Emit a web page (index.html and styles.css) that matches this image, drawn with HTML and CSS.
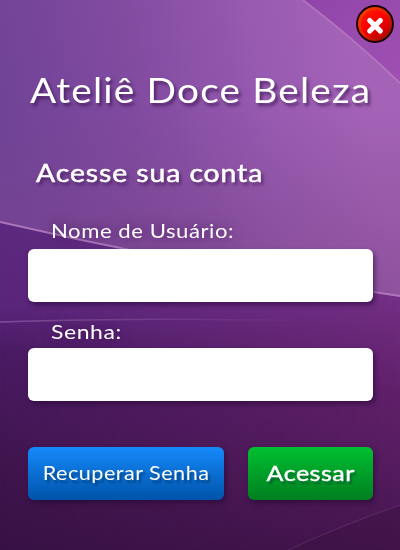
FILE: index.html
```html
<!DOCTYPE html>
<html lang="pt-BR">
<head>
<meta charset="utf-8">
<title>Ateliê Doce Beleza</title>
<link rel="stylesheet" href="styles.css">
</head>
<body>
<main class="login">
  <svg class="backdrop" viewBox="0 0 400 550" aria-hidden="true">
    <defs>
      <linearGradient id="upper" gradientUnits="userSpaceOnUse" x1="0" y1="100" x2="350" y2="30">
        <stop offset="0" stop-color="#704397"/><stop offset=".35" stop-color="#804a9f"/><stop offset=".72" stop-color="#965ab0"/><stop offset="1" stop-color="#a463b7"/>
      </linearGradient>
      <linearGradient id="shade" x1="0" y1="0" x2="0" y2="1">
        <stop offset=".35" stop-color="#7c4387" stop-opacity="0"/><stop offset="1" stop-color="#7c4387" stop-opacity=".55"/>
      </linearGradient>
      <linearGradient id="corner" x1="0" y1="0" x2="1" y2="1">
        <stop offset="0" stop-color="#9145a9"/><stop offset="1" stop-color="#a050b3"/>
      </linearGradient>
      <linearGradient id="lower" gradientUnits="userSpaceOnUse" x1="0" y1="225" x2="0" y2="550">
        <stop offset="0" stop-color="#5c297f"/><stop offset=".25" stop-color="#58257a"/><stop offset=".4" stop-color="#4a1a63"/><stop offset=".72" stop-color="#40154f"/><stop offset="1" stop-color="#371145"/>
      </linearGradient>
      <linearGradient id="warm" gradientUnits="userSpaceOnUse" x1="0" y1="290" x2="0" y2="550">
        <stop offset="0" stop-color="#753087"/><stop offset=".4" stop-color="#602069"/><stop offset=".72" stop-color="#531b5c"/><stop offset="1" stop-color="#45154e"/>
      </linearGradient>
      <linearGradient id="fade"><stop offset="0" stop-color="#fff" stop-opacity="0"/><stop offset="1" stop-color="#fff"/></linearGradient>
      <linearGradient id="streak"><stop offset="0" stop-color="#a86fb5" stop-opacity=".55"/><stop offset="1" stop-color="#a86fb5" stop-opacity="0"/></linearGradient>
      <mask id="side"><rect width="400" height="550" fill="url(#fade)"/></mask>
    </defs>
    <rect width="400" height="300" fill="url(#upper)"/>
    <rect width="400" height="300" fill="url(#shade)"/>
    <path d="M303 0H400V83Q352 37 303 0Z" fill="url(#corner)"/>
    <path d="M303 0Q352 37 400 83" class="line edge"/>
    <path d="M0 222Q198 268 400 296V550H0Z" fill="url(#lower)"/>
    <path d="M0 222Q198 268 400 296V550H0Z" fill="url(#warm)" mask="url(#side)"/>
    <path d="M0 222Q198 268 400 296" class="line"/>
    <path d="M0 322Q150 317 310 321" fill="none" stroke="url(#streak)" stroke-width="1.5"/>
    <path d="M288 550Q345 524 400 505V550Z" fill="#38103f" opacity=".35"/>
    <path d="M288 550Q345 524 400 505" class="line faint"/>
  </svg>
  <button class="close" type="button" aria-label="Fechar">
    <svg viewBox="0 0 38 38">
      <defs>
        <linearGradient id="rim" x1="0" y1="0" x2="1" y2="1"><stop offset="0" stop-color="#f84800"/><stop offset=".45" stop-color="#e82400"/><stop offset="1" stop-color="#850000"/></linearGradient>
        <linearGradient id="core" x1=".2" y1="0" x2=".8" y2="1"><stop offset="0" stop-color="#ff1600"/><stop offset=".5" stop-color="#fa0000"/><stop offset="1" stop-color="#bd0000"/></linearGradient>
      </defs>
      <circle cx="19" cy="19" r="18" fill="url(#rim)" stroke="#180003" stroke-width="1.8"/>
      <circle cx="19" cy="19" r="14" fill="url(#core)"/>
      <path d="M13.7 15.5L24.3 26M24.3 15.5L13.7 26" fill="none" stroke="#fff" stroke-width="5.2" stroke-linecap="round"/>
    </svg>
  </button>
  <h1 class="title">Ateliê Doce Beleza</h1>
  <h2 class="subtitle">Acesse sua conta</h2>
  <form class="form">
    <label class="label" for="user">Nome de Usuário:</label>
    <input class="field" id="user" type="text">
    <label class="label second" for="pass">Senha:</label>
    <input class="field" id="pass" type="password">
    <div class="actions">
      <button class="btn recover" type="button"><span>Recuperar Senha</span></button>
      <button class="btn enter" type="button"><span>Acessar</span></button>
    </div>
  </form>
</main>
</body>
</html>
```
FILE: styles.css
```css
* { box-sizing: border-box; }
body { margin: 0; font-family: "Century Gothic", Lato, sans-serif; color: #fff; }
.login { position: relative; width: 400px; height: 550px; padding: 67px 27px 0 28px; overflow: hidden; isolation: isolate; }
.backdrop { position: absolute; inset: 0; z-index: -1; width: 400px; height: 550px; }
.line { fill: none; stroke: #bd83c5; stroke-width: 1.8; opacity: .8; }
.edge { opacity: .65; }
.faint { stroke-width: 1; opacity: .2; }
.close { position: absolute; top: 5px; right: 6px; width: 38px; height: 38px; padding: 0; border: 0; background: none; }
.close svg { display: block; }
.title, .subtitle, .label { width: max-content; white-space: nowrap; transform-origin: left center; }
.title, .subtitle { margin: 0 0 0 2px; text-shadow: 2px 3px 3px rgba(45, 10, 65, .6); }
.title { font-size: 34px; line-height: 46px; font-weight: 400; letter-spacing: 1px; transform: scaleX(1.144); }
.subtitle { margin: 41px 0 0 8px; font-size: 25px; line-height: 36px; font-weight: 400; letter-spacing: .8px; -webkit-text-stroke: .5px #fff; transform: scaleX(1.135); }
.form { display: flex; flex-direction: column; margin-top: 28px; }
.label { height: 31px; margin-left: 23px; font-size: 20px; line-height: 24px; letter-spacing: .5px; text-shadow: 0 0 10px rgba(55, 15, 80, .7); transform: scaleX(1.105); }
.second { margin-top: 17px; height: 29px; transform: scaleX(1.15); }
.field { width: 345px; height: 53px; padding: 0 14px; border: 0; border-radius: 6px; background: #fff; box-shadow: 2px 3px 5px rgba(35, 5, 50, .55); font: 18px Lato, sans-serif; outline: 0; }
.actions { display: flex; justify-content: space-between; margin-top: 46px; }
.btn { height: 53px; padding: 0 0 2px; border: 0; border-radius: 6px; color: #fff; font-family: inherit; box-shadow: 2px 3px 5px rgba(30, 5, 45, .5); text-shadow: 2px 3px 2px rgba(0, 30, 60, .45); white-space: nowrap; }
.btn span { display: inline-block; transform: scaleX(1.14); }
.recover { width: 196px; background: linear-gradient(#1589fb, #0054aa); font-size: 19px; letter-spacing: .4px; }
.enter { width: 125px; background: linear-gradient(#00c030, #007f20); font-size: 22px; letter-spacing: .4px; -webkit-text-stroke: .4px #fff; }
```
